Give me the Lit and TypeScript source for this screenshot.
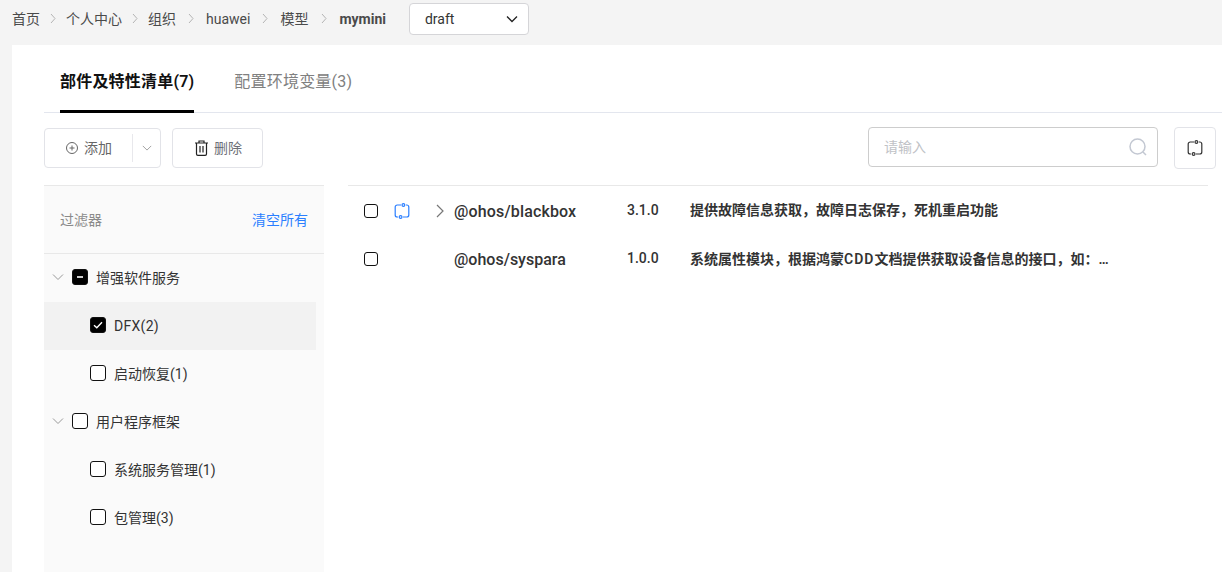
import { LitElement, html, css, svg } from "lit";
import { customElement } from "lit/decorators.js";

const chevR = svg`<path d="M2 1l4 4.5L2 10" fill="none" stroke="currentColor" stroke-width="1"/>`;

function loopIcon(color: string) {
  return html`<svg width="16" height="16" viewBox="0 0 16 16" fill="none" stroke=${color} stroke-width="1.2">
    <path d="M7 2H3.2A2 2 0 0 0 1.2 4v8a2 2 0 0 0 2 2h.8"/>
    <path d="M9 14h3.8a2 2 0 0 0 2-2V4a2 2 0 0 0-2-2H12"/>
    <circle cx="9.4" cy="2" r="1.4"/>
    <circle cx="6.6" cy="14" r="1.4"/>
  </svg>`;
}

@customElement("app-root")
export class AppRoot extends LitElement {
  static styles = css`
    :host {
      display: block;
      width: 1222px;
      height: 572px;
      overflow: hidden;
      background: #f4f4f4;
      font-family: "Roboto", "Noto Sans CJK SC", sans-serif;
      font-size: 14px;
      color: #333;
    }
    * { box-sizing: border-box; }
    .crumbs {
      height: 45px;
      display: flex;
      align-items: center;
      padding: 0 0 8px 12px;
      color: #4a4a4a;
      font-size: 14px;
      line-height: 20px;
    }
    .sep { color: #b4b4b4; display: flex; justify-content: center; }
    .bold { font-weight: 700; }
    .select {
      width: 120px;
      height: 32px;
      margin-left: 23px;
      background: #fff;
      border: 1px solid #d5d5d8;
      border-radius: 4px;
      display: flex;
      align-items: center;
      justify-content: space-between;
      padding: 0 9px 0 15px;
      color: #333;
    }
    .card { margin-left: 12px; height: 527px; background: #fff; padding-left: 32px; overflow: hidden; }
    .tabs { height: 68px; border-bottom: 1px solid #e3e6ee; display: flex; padding-left: 16px; }
    .tab { font-size: 16px; line-height: 24px; letter-spacing: 0.2px; padding-top: 25px; height: 68px; color: #808080; margin-right: 40px; }
    .tab.on { color: #111; font-weight: 600; border-bottom: 3px solid #000; }
    .bar { display: flex; align-items: flex-start; height: 72px; padding-top: 14px; }
    .btn {
      height: 40px;
      margin-top: 1px;
      border: 1px solid #e2e3e8;
      border-radius: 4px;
      background: #fff;
      display: flex;
      align-items: center;
      color: #666;
      font-size: 14px;
    }
    .btn span { padding-bottom: 2px; }
    .add { width: 117px; }
    .add .main { width: 88px; height: 28px; border-right: 1px solid #e8e8ec; display: flex; align-items: center; padding-left: 20px; gap: 5px; }
    .add .drop { flex: 1; display: flex; justify-content: center; color: #909090; }
    .del { width: 91px; margin-left: 11px; padding-left: 21px; gap: 5px; }
    .del span { color: #6e7078; }
    .search {
      margin-left: auto;
      width: 290px;
      height: 40px;
      border: 1px solid #cdcdcd;
      border-radius: 4px;
      display: flex;
      align-items: center;
      justify-content: space-between;
      padding: 0 9px 0 15px;
      color: #c0c2c6;
      font-size: 14px;
    }
    .search span { padding-bottom: 2px; }
    .refresh {
      width: 42px;
      height: 42px;
      margin: 0 6px 0 16px;
      border: 1px solid #e2e3e8;
      border-radius: 4px;
      display: flex;
      align-items: center;
      justify-content: center;
    }
    .main-area { display: flex; gap: 24px; }
    .filter { width: 280px; height: 400px; background: #fafafa; border-top: 1px solid #e8e8e8; flex: none; }
    .fhead {
      height: 68px;
      border-bottom: 1px solid #e8e8e8;
      display: flex;
      align-items: center;
      justify-content: space-between;
      padding: 0 16px 2px;
      color: #8a8a8a;
    }
    .clear { color: #2b7fff; }
    .row { height: 48px; width: 272px; display: flex; align-items: center; color: #333; font-size: 14px; padding-bottom: 2px; }
    .row.parent { padding-left: 8px; }
    .row.child { padding-left: 46px; }
    .row.sel { background: #f2f2f2; }
    .dfx { letter-spacing: 0.3px; padding-top: 2px; }
    .tw { width: 12px; margin-right: 8px; display: flex; color: #999; }
    .cb {
      width: 16px;
      height: 16px;
      border: 1px solid #111;
      border-radius: 3px;
      background: #fff;
      flex: none;
      display: flex;
      align-items: center;
      justify-content: center;
    }
    .cb.fill { background: #000; }
    .row .cb { margin-right: 8px; }
    .list { width: 860px; border-top: 1px solid #e8e8e8; flex: none; }
    .item { height: 48px; display: flex; align-items: center; padding: 0 0 2px 16px; }
    .item:first-child { height: 50px; padding-bottom: 0; }
    .item .cb { width: 14px; height: 14px; }
    .item .ic { width: 16px; margin-left: 16px; margin-right: 20px; display: flex; }
    .item .ex { width: 20px; margin-right: 4px; color: #777; display: flex; justify-content: center; }
    .name { width: 173px; font-size: 16px; font-weight: 500; color: #333; }
    .item:first-child .name { letter-spacing: 0.15px; }
    .ver { width: 63px; font-size: 14px; font-weight: 500; color: #333; padding-bottom: 2px; }
    .desc { font-size: 14px; font-weight: 600; color: #333; white-space: nowrap; padding-bottom: 2px; }
    .item:first-child .desc { padding-bottom: 4px; }
    .lat { letter-spacing: 1px; }
  `;

  cb(kind = "") {
    if (kind === "check")
      return html`<span class="cb fill"><svg width="12" height="12" viewBox="0 0 12 12"><path d="M2 6.2l2.8 2.6L10 3.2" fill="none" stroke="#fff" stroke-width="1.4"/></svg></span>`;
    if (kind === "part")
      return html`<span class="cb fill"><svg width="12" height="12" viewBox="0 0 12 12"><path d="M3 6h6" stroke="#fff" stroke-width="1.6"/></svg></span>`;
    return html`<span class="cb"></span>`;
  }

  down(size = 12) {
    return html`<svg width=${size} height=${size} viewBox="0 0 12 12"><path d="M1 3.5l5 5 5-5" fill="none" stroke="currentColor" stroke-width="1"/></svg>`;
  }

  render() {
    const crumbs = ["首页", "个人中心", "组织", "huawei", "模型"];
    const gaps = [26, 26, 30, 30, 31];
    return html`
      <div class="crumbs">
        ${crumbs.map(
          (c, i) => html`<span>${c}</span><span class="sep" style="width:${gaps[i]}px"><svg width="8" height="12" viewBox="0 0 8 12">${chevR}</svg></span>`
        )}
        <span class="bold">mymini</span>
        <div class="select"><span>draft</span><svg width="14" height="14" viewBox="0 0 14 14"><path d="M2 4.5l5 5 5-5" fill="none" stroke="#222" stroke-width="1.3"/></svg></div>
      </div>
      <div class="card">
        <div class="tabs">
          <div class="tab on">部件及特性清单(7)</div>
          <div class="tab">配置环境变量(3)</div>
        </div>
        <div class="bar">
          <div class="btn add">
            <div class="main">
              <svg width="14" height="14" viewBox="0 0 14 14" fill="none" stroke="#666"><circle cx="7" cy="7" r="5.5"/><path d="M7 4.5v5M4.5 7h5"/></svg>
              <span>添加</span>
            </div>
            <div class="drop">${this.down(10)}</div>
          </div>
          <div class="btn del">
            <svg width="15" height="16" viewBox="0 0 15 16" fill="none" stroke="#222" stroke-width="1.2"><path d="M1 3h13M5 3V1h5v2M2.5 3v11a1.4 1.4 0 0 0 1.4 1.4h7.2a1.4 1.4 0 0 0 1.4-1.4V3M6 6v6.5M9 6v6.5"/></svg>
            <span>删除</span>
          </div>
          <div class="search">
            <span>请输入</span>
            <svg width="20" height="20" viewBox="0 0 20 20" fill="none" stroke="#c3c8d2" stroke-width="1.5"><circle cx="9.5" cy="9.5" r="7.5"/><path d="M15 15l3 3"/></svg>
          </div>
          <div class="refresh">${loopIcon("#333")}</div>
        </div>
        <div class="main-area">
          <div class="filter">
            <div class="fhead"><span>过滤器</span><span class="clear">清空所有</span></div>
            <div class="row parent"><span class="tw">${this.down()}</span>${this.cb("part")}<span>增强软件服务</span></div>
            <div class="row child sel">${this.cb("check")}<span class="dfx">DFX(2)</span></div>
            <div class="row child">${this.cb()}<span>启动恢复(1)</span></div>
            <div class="row parent"><span class="tw">${this.down()}</span>${this.cb()}<span>用户程序框架</span></div>
            <div class="row child">${this.cb()}<span>系统服务管理(1)</span></div>
            <div class="row child">${this.cb()}<span>包管理(3)</span></div>
          </div>
          <div class="list">
            <div class="item">
              ${this.cb()}
              <span class="ic">${loopIcon("#2b7fff")}</span>
              <span class="ex"><svg width="8" height="14" viewBox="0 0 8 14"><path d="M1 1l6 6-6 6" fill="none" stroke="currentColor" stroke-width="1.2"/></svg></span>
              <span class="name">@ohos/blackbox</span>
              <span class="ver">3.1.0</span>
              <span class="desc">提供故障信息获取，故障日志保存，死机重启功能</span>
            </div>
            <div class="item">
              ${this.cb()}
              <span class="ic"></span>
              <span class="ex"></span>
              <span class="name">@ohos/syspara</span>
              <span class="ver">1.0.0</span>
              <span class="desc">系统属性模块，根据鸿蒙<span class="lat">CDD</span>文档提供获取设备信息的接口，如：…</span>
            </div>
          </div>
        </div>
      </div>
    `;
  }
}
